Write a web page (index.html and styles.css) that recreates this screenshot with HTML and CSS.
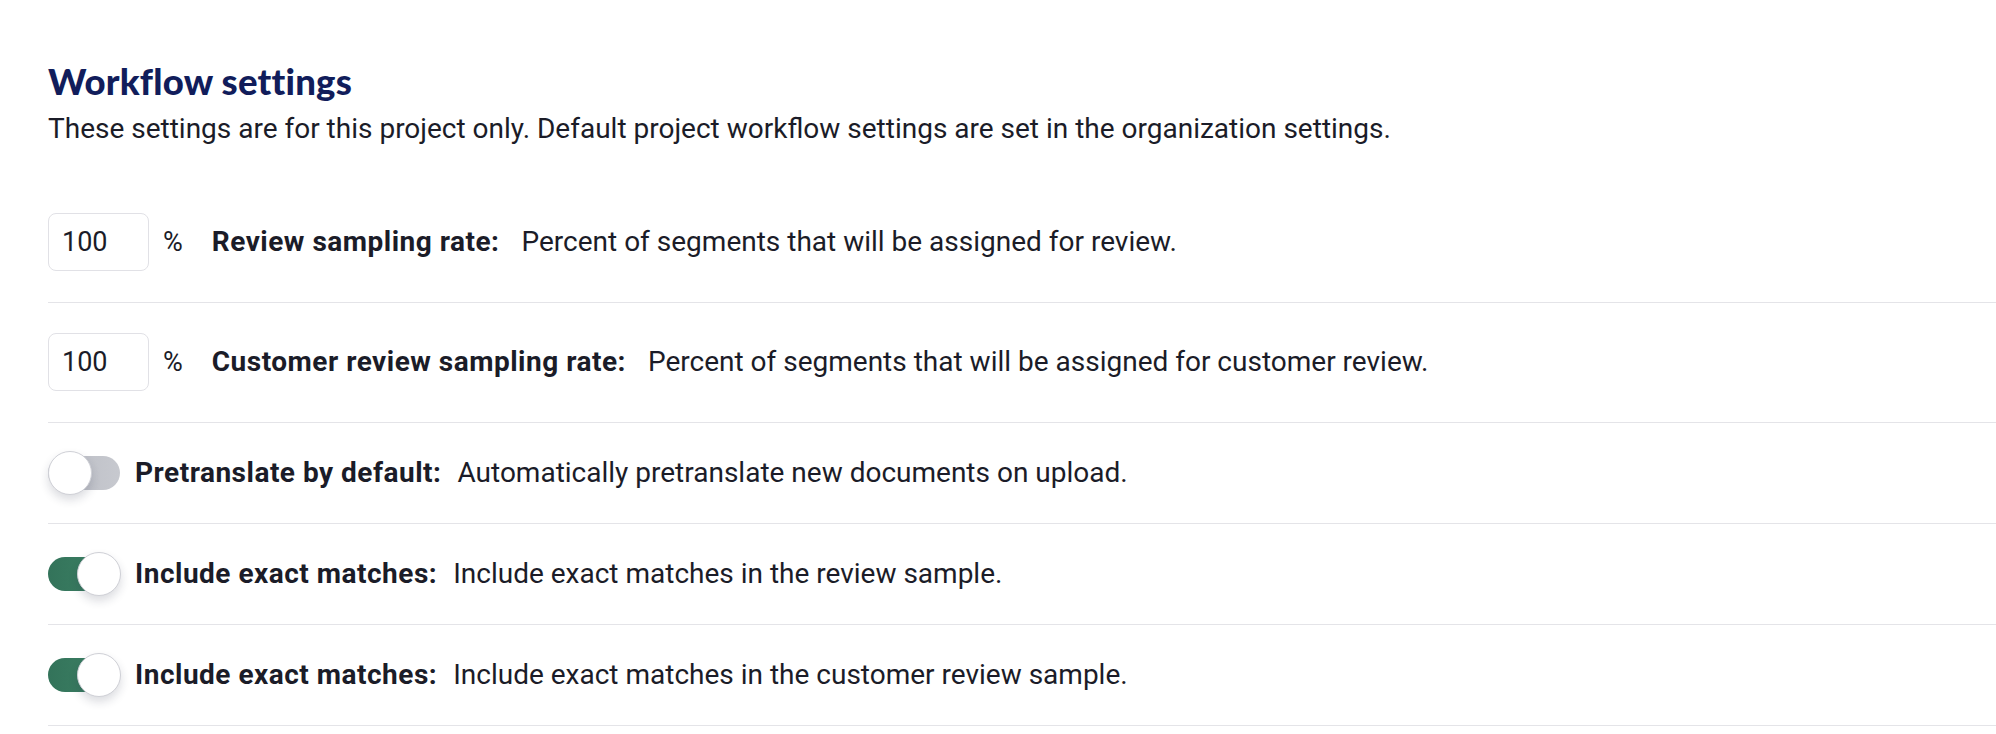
FILE: index.html
```html
<!DOCTYPE html>
<html lang="en">
<head>
<meta charset="utf-8">
<title>Workflow settings</title>
<link rel="stylesheet" href="styles.css">
</head>
<body>
<div class="page">
  <h1 class="title">Workflow settings</h1>
  <p class="subtitle">These settings are for this project only. Default project workflow settings are set in the organization settings.</p>
  <div class="settings">
    <div class="row row-input">
      <div class="num-box">100</div>
      <span class="unit">%</span>
      <p class="text"><b class="label">Review sampling rate:</b><span class="desc">Percent of segments that will be assigned for review.</span></p>
    </div>
    <div class="row row-input">
      <div class="num-box">100</div>
      <span class="unit">%</span>
      <p class="text"><b class="label">Customer review sampling rate:</b><span class="desc">Percent of segments that will be assigned for customer review.</span></p>
    </div>
    <div class="row row-toggle">
      <div class="toggle off"><div class="track"></div><div class="knob"></div></div>
      <p class="text"><b class="label">Pretranslate by default:</b><span class="desc">Automatically pretranslate new documents on upload.</span></p>
    </div>
    <div class="row row-toggle">
      <div class="toggle on"><div class="track"></div><div class="knob"></div></div>
      <p class="text"><b class="label">Include exact matches:</b><span class="desc">Include exact matches in the review sample.</span></p>
    </div>
    <div class="row row-toggle">
      <div class="toggle on"><div class="track"></div><div class="knob"></div></div>
      <p class="text"><b class="label">Include exact matches:</b><span class="desc">Include exact matches in the customer review sample.</span></p>
    </div>
  </div>
</div>
</body>
</html>
```

FILE: styles.css
```css
* { box-sizing: border-box; }
html, body { margin: 0; padding: 0; background: #ffffff; }
body {
  font-family: Roboto, "Liberation Sans", sans-serif;
  color: #1b1c28;
}
.page {
  padding: 60px 0 0 48px;
}
.title {
  margin: 0;
  font-family: Lato, "Liberation Sans", sans-serif;
  font-weight: 900;
  font-size: 36.5px;
  line-height: 42px;
  letter-spacing: 0.2px;
  color: #111d5b;
}
.subtitle {
  margin: 9px 0 36px 0;
  font-size: 28px;
  line-height: 36px;
}
.settings {
  display: flex;
  flex-direction: column;
}
.row {
  display: flex;
  align-items: center;
  border-bottom: 1px solid #e4e4e8;
}
.row-input {
  padding: 30px 0 31px 0;
}
.row-toggle {
  padding: 28px 0 28px 0;
}
.num-box {
  width: 101px;
  height: 58px;
  border: 1px solid #e1e1e6;
  border-radius: 8px;
  padding-left: 13px;
  display: flex;
  align-items: center;
  font-size: 27px;
}
.unit {
  margin-left: 14px;
  margin-right: 29px;
  font-size: 27px;
}
.text {
  margin: 0;
  font-size: 28px;
  line-height: 36px;
}
.label {
  font-weight: 700;
  letter-spacing: 0.5px;
}
.desc {
  margin-left: 16px;
}
.row-input .desc {
  margin-left: 22px;
}
.toggle {
  position: relative;
  width: 73px;
  height: 44px;
  display: flex;
  align-items: center;
  margin-right: 14px;
  flex: none;
}
.track {
  width: 72px;
  height: 34px;
  border-radius: 17px;
}
.toggle.off .track {
  background: linear-gradient(90deg, #b9bbc3, #c7c9cf);
}
.toggle.on .track {
  background: linear-gradient(90deg, #33735a, #3f8467);
}
.knob {
  position: absolute;
  top: 0;
  width: 44px;
  height: 44px;
  border-radius: 50%;
  background: #ffffff;
  border: 1px solid #cfd0d6;
  box-shadow: 0 5px 10px rgba(30, 35, 60, 0.16);
}
.toggle.off .knob { left: 0; }
.toggle.on .knob { right: 0; }
```
